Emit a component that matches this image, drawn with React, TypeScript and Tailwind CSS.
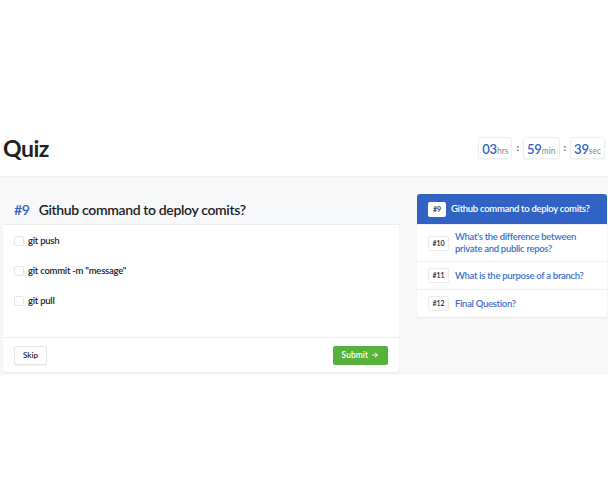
import React from "react";

const options = ["git push", 'git commit -m "message"', "git pull"];

const questions = [
  { n: 9, text: "Github command to deploy comits?", active: true },
  { n: 10, text: "What's the difference between private and public repos?" },
  { n: 11, text: "What is the purpose of a branch?" },
  { n: 12, text: "Final Question?" },
];

function TimeBox({ value, unit }: { value: string; unit: string }) {
  return (
    <div className="flex h-[22px] items-baseline rounded-[3px] border border-[#eeeeee] bg-white px-[3px] pt-[2px] shadow-[0_1px_2px_rgba(0,0,0,0.05)]">
      <span className="text-[13px] font-semibold leading-[18px] tracking-[-0.2px] text-[#2f63c6]">{value}</span>
      <span className="text-[8.5px] leading-[18px] text-[#888]">{unit}</span>
    </div>
  );
}

export default function App() {
  return (
    <div className="h-[504px] w-[608px] bg-white font-['Lato',sans-serif] text-[#222]">
      {/* header */}
      <div className="flex h-[177px] items-end">
        <div className="flex h-[57px] w-full items-center justify-between border-b border-[#f0f0f0] pl-[3px] pr-[3px]">
          <h1 className="text-[23px] font-bold leading-none tracking-[-0.5px] text-[#222]">Quiz</h1>
          <div className="flex items-center gap-[4px] pb-[1px]">
            <TimeBox value="03" unit="hrs" />
            <span className="text-[10px] font-bold text-[#555]">:</span>
            <TimeBox value="59" unit="min" />
            <span className="text-[10px] font-bold text-[#555]">:</span>
            <TimeBox value="39" unit="sec" />
          </div>
        </div>
      </div>

      {/* content */}
      <div className="flex gap-[18px] bg-[#f8f8f8] pb-[3px] pl-[3px] pr-[1px] pt-[17px]">
        <div className="flex w-[396px] flex-col rounded-[3px] bg-white shadow-[0_1px_2px_rgba(0,0,0,0.06)]">
          <div className="flex h-[31px] items-center gap-[9px] rounded-t-[3px] border-b border-[#eeeeee] bg-[#f7f8fa] px-[11px]">
            <span className="text-[14px] font-semibold tracking-[-0.3px] text-[#2f63c6]">#9</span>
            <span className="text-[14px] font-semibold tracking-[-0.35px] text-[#222]">Github command to deploy comits?</span>
          </div>
          <div className="flex h-[112px] flex-col gap-[14px] px-[11px] pt-[8px]">
            {options.map((o) => (
              <label key={o} className="flex h-[16px] items-center gap-[4px]">
                <span className="h-[10px] w-[10px] rounded-[2px] border border-[#e6e6e6] bg-white" />
                <span className="text-[9.5px] font-semibold tracking-[-0.25px] text-[#222]">{o}</span>
              </label>
            ))}
          </div>
          <div className="flex h-[35px] items-center justify-between border-t border-[#eeeeee] px-[11px]">
            <button className="h-[19px] rounded-[2px] border border-[#e6e6e6] bg-white px-[8px] text-[8px] font-semibold text-[#222] shadow-[0_1px_1px_rgba(0,0,0,0.05)]">
              Skip
            </button>
            <button className="flex h-[19px] items-center gap-[3px] rounded-[2px] bg-[#58b13a] px-[9px] text-[8.5px] font-semibold text-white">
              Submit
              <svg width="8" height="8" viewBox="0 0 24 24" fill="none" stroke="currentColor" strokeWidth="3" strokeLinecap="round" strokeLinejoin="round">
                <path d="M5 12h14M13 6l6 6-6 6" />
              </svg>
            </button>
          </div>
        </div>

        <div className="w-[190px] self-start overflow-hidden rounded-[3px] bg-white shadow-[0_1px_2px_rgba(0,0,0,0.06)]">
          {questions.map((q) => (
            <div
              key={q.n}
              className={
                q.active
                  ? "flex min-h-[30px] items-center gap-[5px] bg-[#3163c4] py-[7px] pl-[11px] pr-[6px]"
                  : "flex min-h-[28px] items-center gap-[6px] border-t border-[#f0f0f0] py-[6px] pl-[11px] pr-[6px]"
              }
            >
              <span
                className={
                  q.active
                    ? "flex h-[15px] min-w-[18px] items-center justify-center rounded-[2px] bg-white px-[3px] text-[7px] font-semibold text-[#222]"
                    : "flex h-[15px] min-w-[21px] items-center justify-center rounded-[2px] border border-[#ececec] bg-white px-[3px] text-[7px] font-semibold text-[#222]"
                }
              >
                #{q.n}
              </span>
              <span
                className={
                  q.active
                    ? "text-[9.5px] font-semibold leading-[12px] tracking-[-0.3px] text-white"
                    : "text-[9.5px] font-semibold leading-[12px] tracking-[-0.3px] text-[#3a6fcf]"
                }
              >
                {q.text}
              </span>
            </div>
          ))}
        </div>
      </div>
    </div>
  );
}
